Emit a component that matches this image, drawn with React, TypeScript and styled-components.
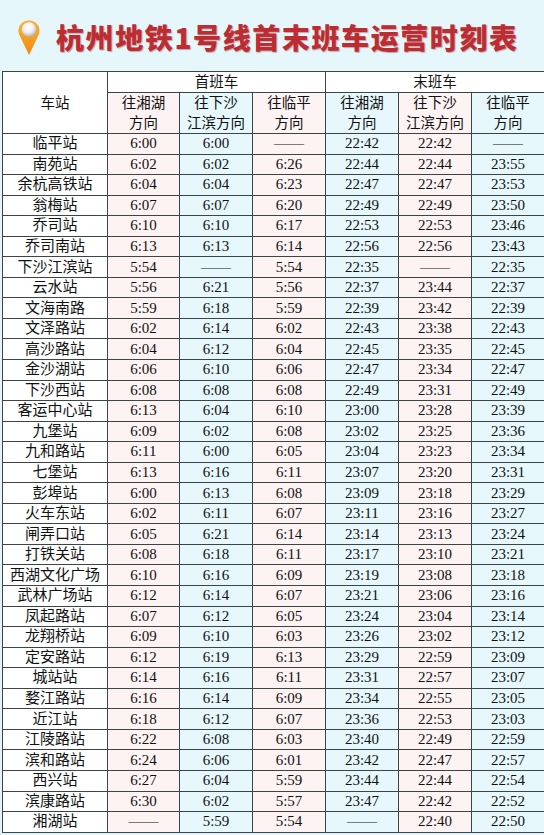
import React from "react"
import styled, { createGlobalStyle } from "styled-components"

const GlobalStyle = createGlobalStyle`
  html, body {
    margin: 0;
    padding: 0;
    background: #e3f5fa;
  }
  body {
    font-family: "Liberation Serif", "Noto Sans CJK SC", serif;
    overflow: hidden;
  }
`

const Page = styled.div`
  width: 544px;
  height: 835px;
  background: linear-gradient(#e6f7fb, #e2f4f9);
  overflow: hidden;
`

const TitleBar = styled.header`
  height: 71px;
  display: flex;
  align-items: center;
  padding-left: 17px;
  padding-top: 2px;
  gap: 15px;
  box-sizing: border-box;
`

const Title = styled.h1`
  margin: 0;
  flex-shrink: 0;
  white-space: nowrap;
  font-family: "Noto Sans CJK SC", "Liberation Serif", serif;
  font-weight: 900;
  font-size: 28px;
  letter-spacing: 1.6px;
  line-height: 1;
  color: #bd2b33;
  text-shadow: 1px 1px 1px rgba(120, 20, 20, 0.35);
`

const TableWrap = styled.div`
  padding-left: 2px;
`

const Table = styled.table`
  border-collapse: collapse;
  table-layout: fixed;
  width: 542px;
  font-size: 15px;
  color: #111;
  border: 1.5px solid #33403f;
`

type Tone = "white" | "pink" | "blue"

const toneColor: Record<Tone, string> = {
  white: "#ffffff",
  pink: "#fdf3f3",
  blue: "#e6f8fc",
}

const Cell = styled.td<{ $tone: Tone }>`
  border: 1px solid #3a4646;
  background: ${(p) => toneColor[p.$tone]};
  text-align: center;
  vertical-align: middle;
  padding: 0;
  height: 19.55px;
  line-height: 19px;
  white-space: nowrap;
  overflow: hidden;
`

const HeadCell = styled(Cell).attrs({ as: "th" })`
  font-weight: normal;
  font-size: 14.5px;
  line-height: 20px;
`

const GroupRow = styled.tr`
  height: 20px;
`

const DirRow = styled.tr`
  height: 40px;
`

const Row = styled.tr`
  height: 20.56px;
`

const Pin = () => (
  <svg width="24" height="38" viewBox="0 0 22 36">
    <defs>
      <linearGradient id="pinBody" x1="0" y1="0" x2="0" y2="1">
        <stop offset="0" stopColor="#f9b23a" />
        <stop offset="1" stopColor="#f08a0c" />
      </linearGradient>
      <radialGradient id="pinBall" cx="0.45" cy="0.35" r="0.6">
        <stop offset="0" stopColor="#ffffff" />
        <stop offset="0.6" stopColor="#eeeeee" />
        <stop offset="1" stopColor="#b9b9b9" />
      </radialGradient>
    </defs>
    <path
      d="M11 35 L2.6 17.5 A10 10 0 1 1 19.4 17.5 Z"
      fill="url(#pinBody)"
    />
    <circle cx="11" cy="11" r="7" fill="url(#pinBall)" />
  </svg>
)

const D = "——"

// [站名, 首班: 往湘湖, 往下沙江滨, 往临平, 末班: 往湘湖, 往下沙江滨, 往临平]
const rows: string[][] = [
  ["临平站", "6:00", "6:00", D, "22:42", "22:42", D],
  ["南苑站", "6:02", "6:02", "6:26", "22:44", "22:44", "23:55"],
  ["余杭高铁站", "6:04", "6:04", "6:23", "22:47", "22:47", "23:53"],
  ["翁梅站", "6:07", "6:07", "6:20", "22:49", "22:49", "23:50"],
  ["乔司站", "6:10", "6:10", "6:17", "22:53", "22:53", "23:46"],
  ["乔司南站", "6:13", "6:13", "6:14", "22:56", "22:56", "23:43"],
  ["下沙江滨站", "5:54", D, "5:54", "22:35", D, "22:35"],
  ["云水站", "5:56", "6:21", "5:56", "22:37", "23:44", "22:37"],
  ["文海南路", "5:59", "6:18", "5:59", "22:39", "23:42", "22:39"],
  ["文泽路站", "6:02", "6:14", "6:02", "22:43", "23:38", "22:43"],
  ["高沙路站", "6:04", "6:12", "6:04", "22:45", "23:35", "22:45"],
  ["金沙湖站", "6:06", "6:10", "6:06", "22:47", "23:34", "22:47"],
  ["下沙西站", "6:08", "6:08", "6:08", "22:49", "23:31", "22:49"],
  ["客运中心站", "6:13", "6:04", "6:10", "23:00", "23:28", "23:39"],
  ["九堡站", "6:09", "6:02", "6:08", "23:02", "23:25", "23:36"],
  ["九和路站", "6:11", "6:00", "6:05", "23:04", "23:23", "23:34"],
  ["七堡站", "6:13", "6:16", "6:11", "23:07", "23:20", "23:31"],
  ["彭埠站", "6:00", "6:13", "6:08", "23:09", "23:18", "23:29"],
  ["火车东站", "6:02", "6:11", "6:07", "23:11", "23:16", "23:27"],
  ["闸弄口站", "6:05", "6:21", "6:14", "23:14", "23:13", "23:24"],
  ["打铁关站", "6:08", "6:18", "6:11", "23:17", "23:10", "23:21"],
  ["西湖文化广场", "6:10", "6:16", "6:09", "23:19", "23:08", "23:18"],
  ["武林广场站", "6:12", "6:14", "6:07", "23:21", "23:06", "23:16"],
  ["凤起路站", "6:07", "6:12", "6:05", "23:24", "23:04", "23:14"],
  ["龙翔桥站", "6:09", "6:10", "6:03", "23:26", "23:02", "23:12"],
  ["定安路站", "6:12", "6:19", "6:13", "23:29", "22:59", "23:09"],
  ["城站站", "6:14", "6:16", "6:11", "23:31", "22:57", "23:07"],
  ["婺江路站", "6:16", "6:14", "6:09", "23:34", "22:55", "23:05"],
  ["近江站", "6:18", "6:12", "6:07", "23:36", "22:53", "23:03"],
  ["江陵路站", "6:22", "6:08", "6:03", "23:40", "22:49", "22:59"],
  ["滨和路站", "6:24", "6:06", "6:01", "23:42", "22:47", "22:57"],
  ["西兴站", "6:27", "6:04", "5:59", "23:44", "22:44", "22:54"],
  ["滨康路站", "6:30", "6:02", "5:57", "23:47", "22:42", "22:52"],
  ["湘湖站", D, "5:59", "5:54", D, "22:40", "22:50"],
]

const colTones: Tone[] = ["white", "pink", "blue", "pink", "blue", "pink", "blue"]
const colWidths = [105, 72, 73, 73, 73, 73, 73]

const directions: React.ReactNode[] = [
  <>往湘湖<br />方向</>,
  <>往下沙<br />江滨方向</>,
  <>往临平<br />方向</>,
]

export default function App() {
  return (
    <Page>
      <GlobalStyle />
      <TitleBar>
        <Pin />
        <Title>杭州地铁1号线首末班车运营时刻表</Title>
      </TitleBar>
      <TableWrap>
        <Table>
          <colgroup>
            {colWidths.map((w, i) => (
              <col key={i} style={{ width: w }} />
            ))}
          </colgroup>
          <thead>
            <GroupRow>
              <HeadCell $tone="white" rowSpan={2}>车站</HeadCell>
              <HeadCell $tone="white" colSpan={3}>首班车</HeadCell>
              <HeadCell $tone="white" colSpan={3}>末班车</HeadCell>
            </GroupRow>
            <DirRow>
              {[0, 1, 2, 0, 1, 2].map((d, i) => (
                <HeadCell key={i} $tone={colTones[i + 1]}>
                  {directions[d]}
                </HeadCell>
              ))}
            </DirRow>
          </thead>
          <tbody>
            {rows.map((r) => (
              <Row key={r[0]}>
                {r.map((v, i) => (
                  <Cell key={i} $tone={colTones[i]}>{v}</Cell>
                ))}
              </Row>
            ))}
          </tbody>
        </Table>
      </TableWrap>
    </Page>
  )
}
